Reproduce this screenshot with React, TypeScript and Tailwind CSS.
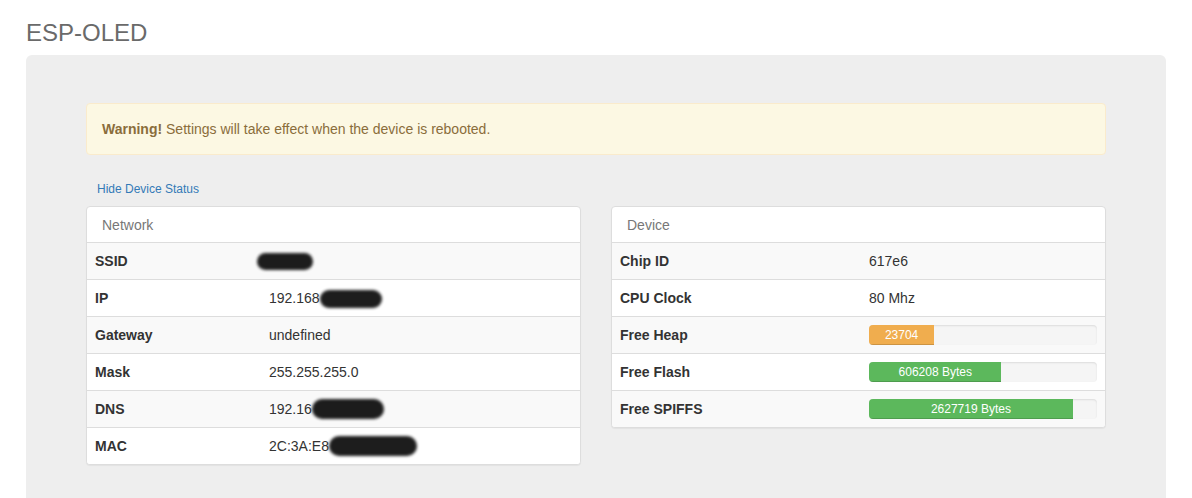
import React from "react";

const Blob = ({ w, h, dy = 0 }: { w: number; h: number; dy?: number }) => (
  <span
    className="inline-block align-middle rounded-full bg-[#111] blur-[1.5px] opacity-95"
    style={{ width: w, height: h, marginTop: dy }}
  />
);

type Row = { label: string; value: React.ReactNode };

const Panel = ({ title, rows, labelW }: { title: string; rows: Row[]; labelW: number }) => (
  <div className="bg-white border border-[#ddd] rounded-[4px] shadow-[0_1px_1px_rgba(0,0,0,0.05)] overflow-hidden">
    <div className="h-[35px] px-[15px] pt-[2px] flex items-center text-[14px] text-[#777]">{title}</div>
    {rows.map((r, i) => (
      <div
        key={r.label}
        className={`h-[37px] border-t border-[#ddd] flex items-center text-[14px] text-[#333] ${
          i % 2 === 0 ? "bg-[#f9f9f9]" : "bg-white"
        }`}
      >
        <div className="px-[8px] font-bold shrink-0" style={{ width: labelW }}>
          {r.label}
        </div>
        <div className="px-[8px] flex-1 flex items-center">{r.value}</div>
      </div>
    ))}
  </div>
);

const Progress = ({ pct, text, color }: { pct: number; text: string; color: string }) => (
  <div className="w-full h-[20px] bg-[#f5f5f5] rounded-[4px] overflow-hidden shadow-[inset_0_1px_2px_rgba(0,0,0,0.1)]">
    <div
      className={`h-full text-center text-white text-[12px] leading-[20px] shadow-[inset_0_-1px_0_rgba(0,0,0,0.15)] ${color}`}
      style={{ width: `${pct}%` }}
    >
      {text}
    </div>
  </div>
);

export default function App() {
  const network: Row[] = [
    { label: "SSID", value: <span className="ml-[-12px] flex items-center"><Blob w={56} h={17} /></span> },
    { label: "IP", value: <span className="flex items-center">192.168<Blob w={62} h={18} dy={2} /></span> },
    { label: "Gateway", value: "undefined" },
    { label: "Mask", value: "255.255.255.0" },
    { label: "DNS", value: <span className="flex items-center">192.16<Blob w={72} h={20} /></span> },
    { label: "MAC", value: <span className="flex items-center">2C:3A:E8<Blob w={88} h={20} /></span> },
  ];
  const device: Row[] = [
    { label: "Chip ID", value: "617e6" },
    { label: "CPU Clock", value: "80 Mhz" },
    { label: "Free Heap", value: <Progress pct={28.6} text="23704" color="bg-[#f0ad4e]" /> },
    { label: "Free Flash", value: <Progress pct={58.1} text="606208 Bytes" color="bg-[#5cb85c]" /> },
    { label: "Free SPIFFS", value: <Progress pct={89.4} text="2627719 Bytes" color="bg-[#5cb85c]" /> },
  ];
  return (
    <div className="min-h-[498px] bg-white font-['Liberation_Sans',Arial,sans-serif] overflow-hidden">
      <div className="w-[1170px] mx-auto px-[15px]">
        <h3 className="pt-[20px] mb-[9px] text-[24px] leading-[26px] text-[#6a6a6a] font-normal">ESP-OLED</h3>
        <div className="bg-[#eee] rounded-[6px] px-[60px] pt-[48px] pb-[48px]">
          <div className="bg-[#fcf8e3] border border-[#faebcc] rounded-[4px] text-[#8a6d3b] text-[14px] leading-[20px] p-[15px]">
            <strong>Warning!</strong> Settings will take effect when the device is rebooted.
          </div>
          <div className="mt-[26px] h-[17px] pl-[11px] text-[12px] leading-[17px] text-[#337ab7]">
            Hide Device Status
          </div>
          <div className="mt-[8px] grid grid-cols-2 gap-[30px]">
            <div>
              <Panel title="Network" rows={network} labelW={174} />
            </div>
            <div className="self-start">
              <Panel title="Device" rows={device} labelW={249} />
            </div>
          </div>
        </div>
      </div>
    </div>
  );
}
